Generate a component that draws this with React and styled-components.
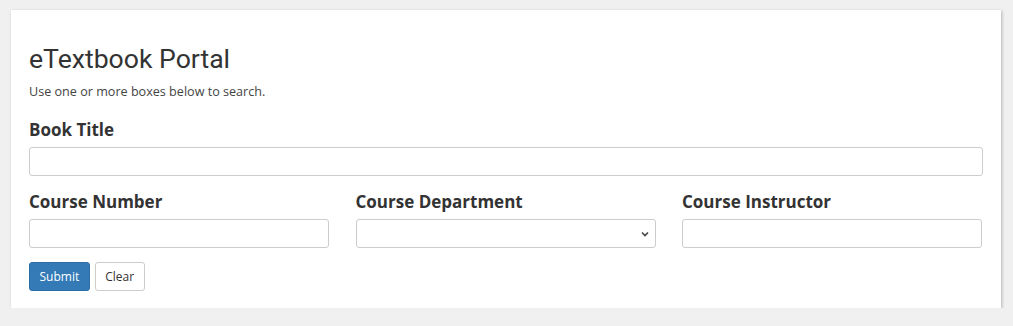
import styled, { createGlobalStyle } from 'styled-components';

const GlobalStyle = createGlobalStyle`
  html, body {
    margin: 0;
    padding: 0;
    background: #f0f0f0;
  }
  body {
    font-family: "Open Sans", "Liberation Sans", sans-serif;
    color: #333;
  }
  * {
    box-sizing: border-box;
  }
`;

function App() {
  return (
    <>
      <GlobalStyle />
      <StPage>
        <StCard>
          <StTitle>eTextbook Portal</StTitle>
          <StHint>Use one or more boxes below to search.</StHint>
          <StField>
            <StLabel htmlFor="title">Book Title</StLabel>
            <StInput id="title" type="text" />
          </StField>
          <StRow>
            <StField>
              <StLabel htmlFor="number">Course Number</StLabel>
              <StInput id="number" type="text" />
            </StField>
            <StField>
              <StLabel htmlFor="dept">Course Department</StLabel>
              <StSelectWrap>
                <StSelect id="dept" defaultValue="">
                  <option value=""></option>
                </StSelect>
                <StChevron viewBox="0 0 10 10">
                  <path d="M2 3.5 L5 6.5 L8 3.5" fill="none" stroke="#444" strokeWidth="1.6" />
                </StChevron>
              </StSelectWrap>
            </StField>
            <StField>
              <StLabel htmlFor="instructor">Course Instructor</StLabel>
              <StInput id="instructor" type="text" />
            </StField>
          </StRow>
          <StButtons>
            <StButton primary>Submit</StButton>
            <StButton>Clear</StButton>
          </StButtons>
        </StCard>
      </StPage>
    </>
  );
}

export default App;

const StPage = styled.div`
  padding: 10px 12px 0 11px;
`;

const StCard = styled.div`
  width: 990px;
  height: 298px;
  background: #fff;
  box-shadow: 1px 1px 3px rgba(0, 0, 0, 0.25);
  padding: 33px 18px 0 18px;
`;

const StTitle = styled.h1`
  font-family: Roboto, "Liberation Sans", sans-serif;
  font-weight: 400;
  font-size: 26.6px;
  line-height: 1.2;
  margin: 0 0 9px 0;
  color: #333;
`;

const StHint = styled.p`
  font-size: 12.6px;
  line-height: 16px;
  margin: 0 0 19px 0;
  color: #444;
`;

const StField = styled.div`
  display: flex;
  flex-direction: column;
  margin-bottom: 15px;
`;

const StLabel = styled.label`
  font-weight: 700;
  font-size: 17px;
  line-height: 22px;
  margin-bottom: 6px;
  color: #333;
`;

const StInput = styled.input`
  height: 29px;
  width: 100%;
  border: 1px solid #ccc;
  border-radius: 3px;
  padding: 4px 8px;
  font-size: 13px;
  font-family: inherit;
  background: #fff;
`;

const StRow = styled.div`
  display: grid;
  grid-template-columns: repeat(3, 300px);
  column-gap: 26.5px;
  margin-bottom: -1px;
`;

const StSelectWrap = styled.div`
  position: relative;
`;

const StSelect = styled.select`
  appearance: none;
  height: 29px;
  width: 100%;
  border: 1px solid #ccc;
  border-radius: 3px;
  padding: 4px 8px;
  font-size: 13px;
  font-family: inherit;
  background: #fff;
`;

const StChevron = styled.svg`
  position: absolute;
  right: 6px;
  top: 10px;
  width: 10px;
  height: 10px;
  pointer-events: none;
`;

const StButtons = styled.div`
  display: flex;
  gap: 5px;
`;

const StButton = styled.button`
  height: 29px;
  padding: 0 9.5px;
  font-family: "Open Sans", "Liberation Sans", sans-serif;
  font-size: 12px;
  border-radius: 3px;
  cursor: pointer;
  border: 1px solid ${({ primary }) => (primary ? '#2e6da4' : '#ccc')};
  background: ${({ primary }) => (primary ? '#337ab7' : '#fff')};
  color: ${({ primary }) => (primary ? '#fff' : '#333')};
`;
